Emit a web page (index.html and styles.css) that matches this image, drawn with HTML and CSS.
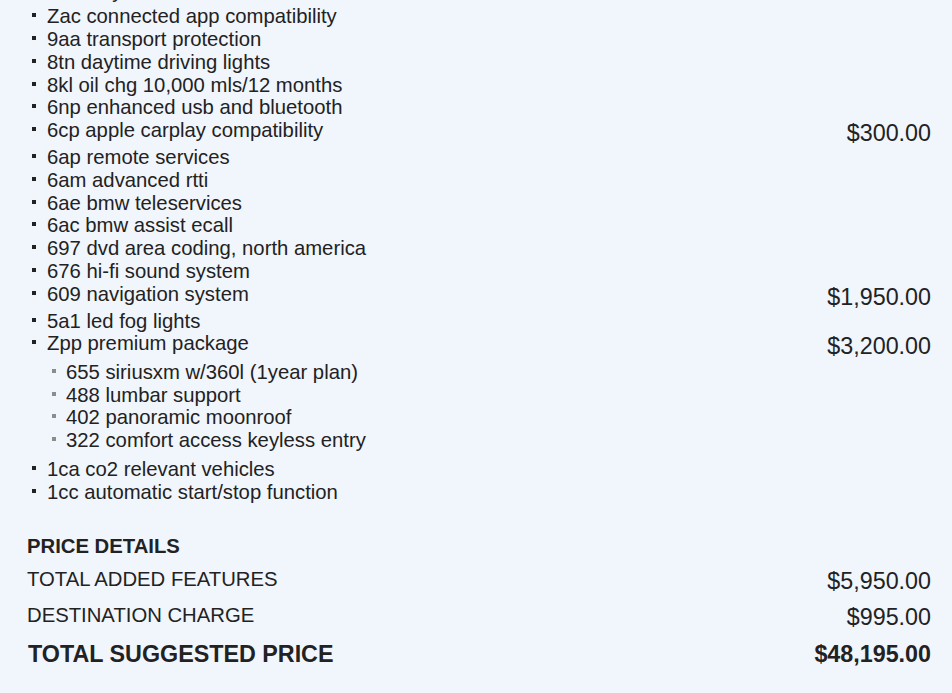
FILE: index.html
```html
<!DOCTYPE html>
<html lang="en">
<head>
<meta charset="utf-8">
<title>Build summary</title>
<link rel="stylesheet" href="styles.css">
</head>
<body>
<main class="page">
  <ul class="options">
    <li class="row row-cut"><span class="name">Zdw key</span></li>
    <li class="row"><span class="name">Zac connected app compatibility</span></li>
    <li class="row"><span class="name">9aa transport protection</span></li>
    <li class="row"><span class="name">8tn daytime driving lights</span></li>
    <li class="row"><span class="name">8kl oil chg 10,000 mls/12 months</span></li>
    <li class="row"><span class="name">6np enhanced usb and bluetooth</span></li>
    <li class="row"><span class="name">6cp apple carplay compatibility</span><span class="price">$300.00</span></li>
    <li class="row"><span class="name">6ap remote services</span></li>
    <li class="row"><span class="name">6am advanced rtti</span></li>
    <li class="row"><span class="name">6ae bmw teleservices</span></li>
    <li class="row"><span class="name">6ac bmw assist ecall</span></li>
    <li class="row"><span class="name">697 dvd area coding, north america</span></li>
    <li class="row"><span class="name">676 hi-fi sound system</span></li>
    <li class="row"><span class="name">609 navigation system</span><span class="price">$1,950.00</span></li>
    <li class="row"><span class="name">5a1 led fog lights</span></li>
    <li class="group">
      <div class="row"><span class="name">Zpp premium package</span><span class="price">$3,200.00</span></div>
      <ul class="sub">
        <li class="row"><span class="name">655 siriusxm w/360l (1year plan)</span></li>
        <li class="row"><span class="name">488 lumbar support</span></li>
        <li class="row"><span class="name">402 panoramic moonroof</span></li>
        <li class="row"><span class="name">322 comfort access keyless entry</span></li>
      </ul>
    </li>
    <li class="row"><span class="name">1ca co2 relevant vehicles</span></li>
    <li class="row"><span class="name">1cc automatic start/stop function</span></li>
  </ul>

  <section class="details">
    <h2 class="details-title">PRICE DETAILS</h2>
    <div class="line"><span>TOTAL ADDED FEATURES</span><span class="amount">$5,950.00</span></div>
    <div class="line"><span>DESTINATION CHARGE</span><span class="amount">$995.00</span></div>
    <div class="line total"><span>TOTAL SUGGESTED PRICE</span><span class="amount">$48,195.00</span></div>
  </section>
</main>
</body>
</html>
```
FILE: styles.css
```css
html, body {
  margin: 0;
  padding: 0;
  background: #f1f5fc;
  height: 100%;
  overflow: hidden;
}

.page {
  font-family: "Liberation Sans", Arial, sans-serif;
  color: #222;
  padding: 0 21px 0 27px;
}

.options,
.sub {
  list-style: none;
  margin: 0;
  padding: 0;
}

.options {
  margin-top: -20px;
  padding-left: 5px;
}

.row {
  display: flex;
  justify-content: space-between;
  align-items: flex-start;
  font-size: 20.3px;
  line-height: 22.75px;
}

.row-cut {
  margin-bottom: 2.5px;
}

.name {
  display: flex;
  align-items: flex-start;
}

.name::before {
  content: "";
  flex: none;
  width: 4px;
  height: 4px;
  margin: 8px 11px 0 0;
  background: #222;
}

.price {
  font-size: 23.3px;
  line-height: 26px;
  padding-top: 1px;
}

.sub {
  padding-left: 20px;
  margin: 1.5px 0 6px;
}

.sub .name::before {
  background: #8c8c8c;
  margin-right: 10px;
}

.details {
  margin-top: 32px;
  display: flex;
  flex-direction: column;
  gap: 10px;
}

.details-title {
  margin: 0;
  font-size: 20.3px;
  line-height: 22.75px;
  font-weight: bold;
}

.line {
  display: flex;
  justify-content: space-between;
  align-items: flex-start;
  font-size: 20.3px;
  line-height: 22.75px;
}

.amount {
  font-size: 23.3px;
  line-height: 26px;
}

.total {
  margin-top: 1px;
  font-size: 23.3px;
  line-height: 26px;
  font-weight: bold;
  padding-left: 1px;
}
```
